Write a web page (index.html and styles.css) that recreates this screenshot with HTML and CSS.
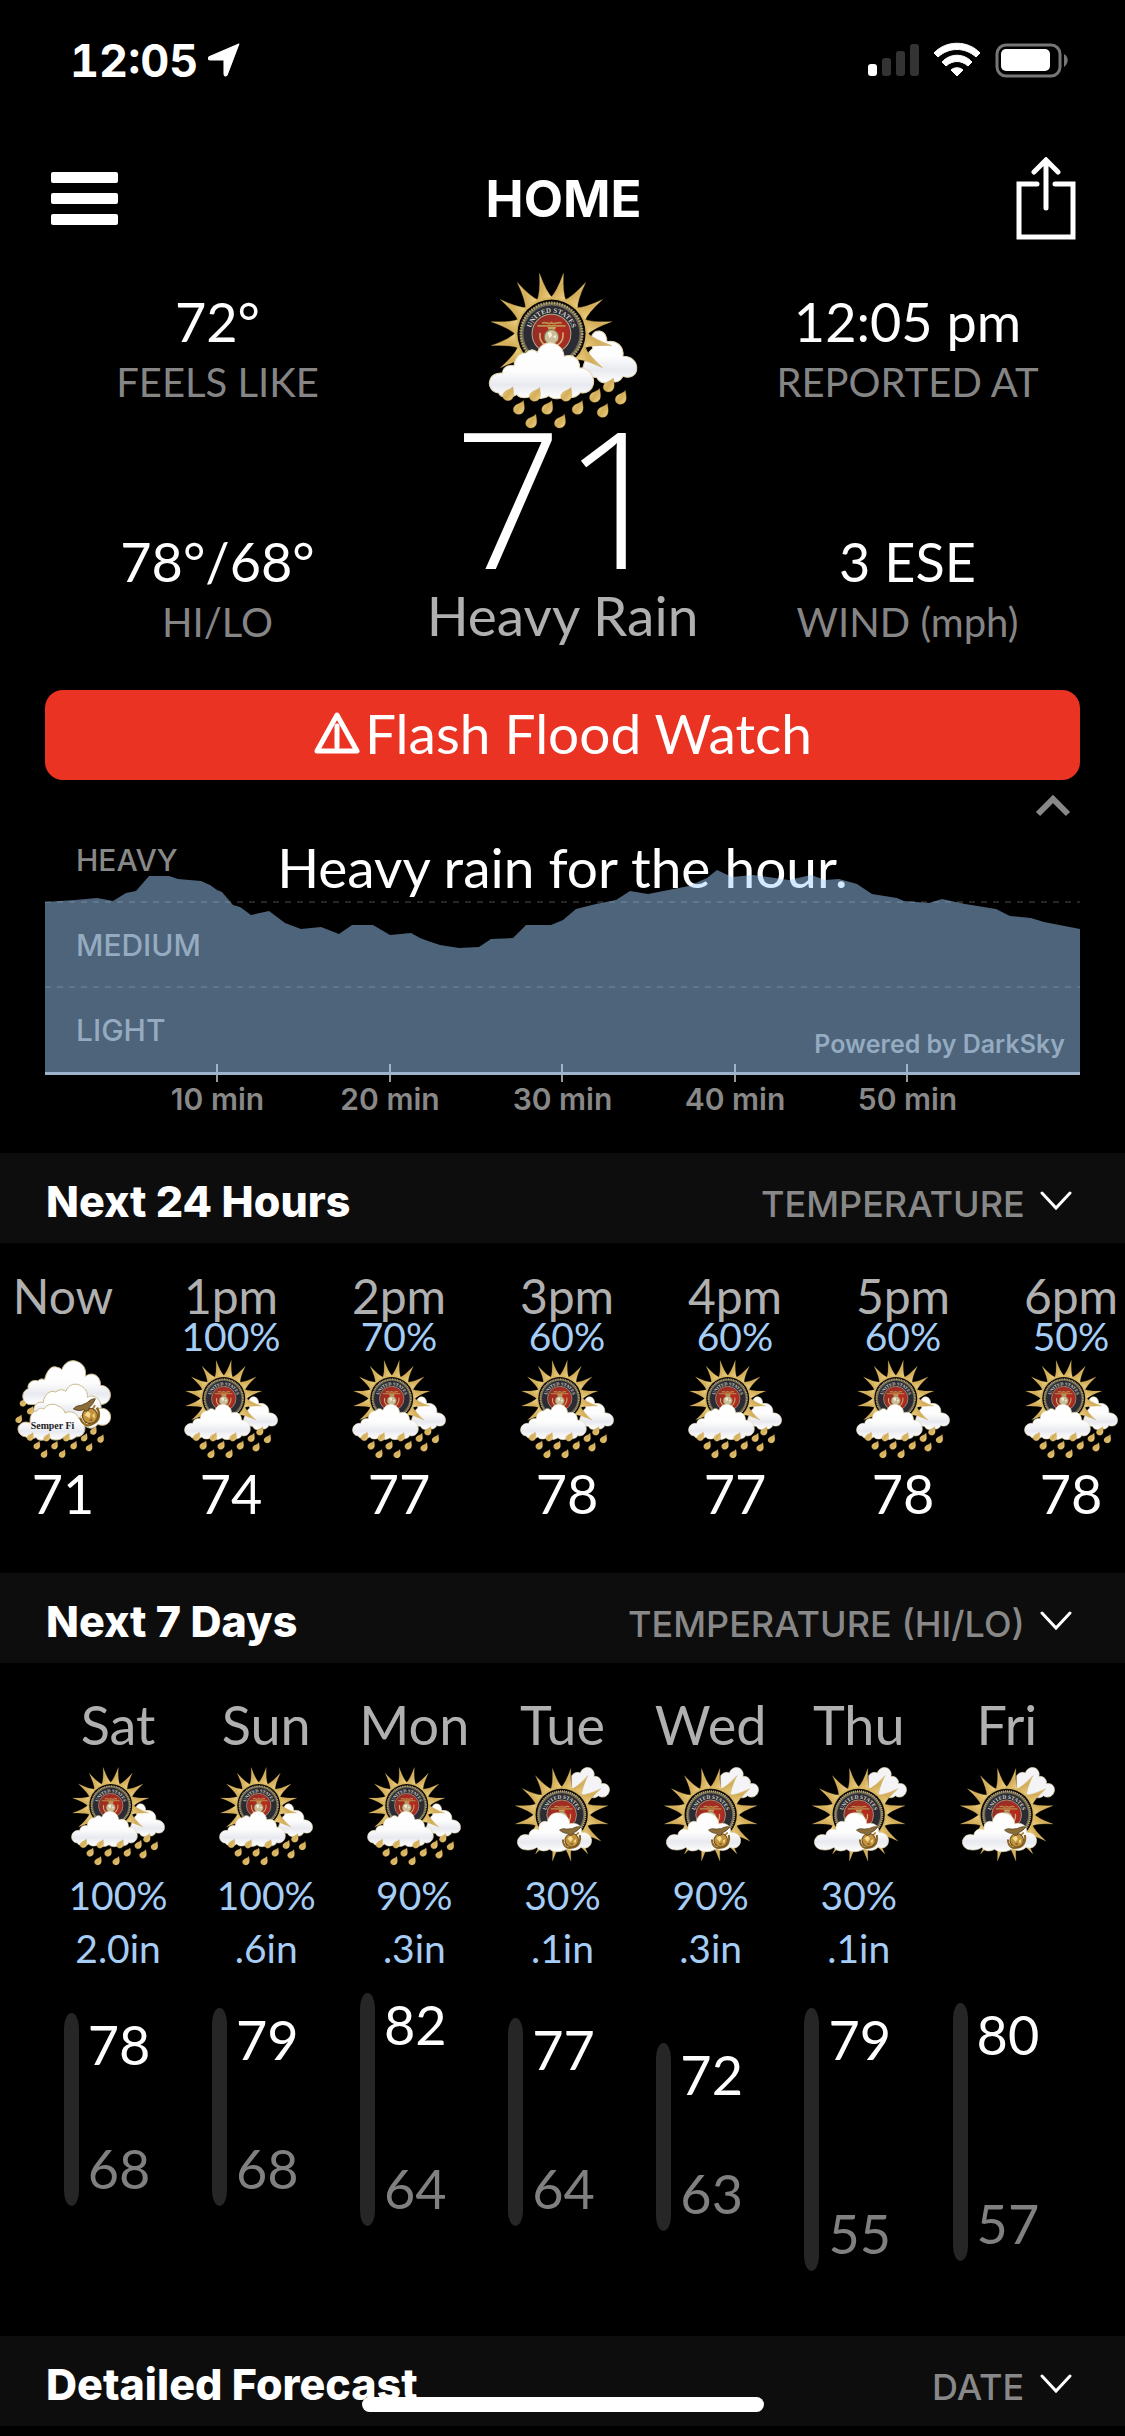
FILE: index.html
```html
<!DOCTYPE html>
<html lang="en">
<head>
    <meta charset="UTF-8">
    <meta name="viewport" content="width=device-width, initial-scale=1.0">
    <title>Weather - Home</title>
    <link rel="stylesheet" href="styles.css">
</head>
<body>
    <!-- shared weather icons -->
    <svg class="sprite" aria-hidden="true">
        <defs>
            <linearGradient id="gold" x1="0" y1="0" x2="1" y2="1">
                <stop offset="0" stop-color="#f1dc92"/>
                <stop offset="0.5" stop-color="#d4ad58"/>
                <stop offset="1" stop-color="#efd68a"/>
            </linearGradient>
            <linearGradient id="cloudFill" x1="0" y1="0" x2="0" y2="1">
                <stop offset="0" stop-color="#ffffff"/>
                <stop offset="0.5" stop-color="#fdfdfd"/>
                <stop offset="0.75" stop-color="#e9eaf0"/>
                <stop offset="1" stop-color="#ffffff"/>
            </linearGradient>
            <radialGradient id="red" cx="0.6" cy="0.5" r="0.6">
                <stop offset="0" stop-color="#c8281c"/>
                <stop offset="1" stop-color="#8c2f28"/>
            </radialGradient>
            <path id="ray" d="M-24 -104 Q-9 -124 0 -184 Q9 -124 24 -104 Z"/>
            <path id="arcTop" d="M-63 0 A63 63 0 0 1 63 0"/>
            <path id="drop" d="M14 -25 C17 -8 19 2 13 10 C5 20 -10 18 -15 8 C-19 -4 -10 -12 -1 -15 C6 -18 11 -21 14 -25 Z" fill="url(#gold)" stroke="#b98f3c" stroke-width="1"/>

            <g id="emblem">
                <path d="M-26 2 C-28 26 -14 33 2 30 C18 29 28 14 26 -4" fill="none" stroke="#8a6422" stroke-width="6"/>
                <path d="M-24 24 L24 -12" stroke="#a67c2e" stroke-width="5"/>
                <circle cx="0" cy="8" r="20" fill="#c39440" stroke="#6b4b17" stroke-width="3"/>
                <path d="M-12 0 L0 -6 L4 4 L-4 13 Z M5 11 L14 6 L9 20 Z" fill="#f6dc88"/>
                <path d="M-8 18 L2 16 L0 24 Z" fill="#8a6422"/>
                <path d="M-32 -27 C-18 -34 -10 -24 0 -27 C10 -24 18 -34 32 -27 C24 -20 16 -14 8 -14 L4 -7 L-4 -7 L-8 -14 C-16 -14 -24 -18 -32 -27 Z" fill="#8c6d38" stroke="#4d3818" stroke-width="2"/>
            </g>

            <g id="sun">
                <g fill="url(#gold)" stroke="#b48f45" stroke-width="1">
                    <use href="#ray" transform="rotate(11.25)"/>
                    <use href="#ray" transform="rotate(33.75)"/>
                    <use href="#ray" transform="rotate(56.25)"/>
                    <use href="#ray" transform="rotate(78.75)"/>
                    <use href="#ray" transform="rotate(101.25)"/>
                    <use href="#ray" transform="rotate(123.75)"/>
                    <use href="#ray" transform="rotate(146.25)"/>
                    <use href="#ray" transform="rotate(168.75)"/>
                    <use href="#ray" transform="rotate(191.25)"/>
                    <use href="#ray" transform="rotate(213.75)"/>
                    <use href="#ray" transform="rotate(236.25)"/>
                    <use href="#ray" transform="rotate(258.75)"/>
                    <use href="#ray" transform="rotate(281.25)"/>
                    <use href="#ray" transform="rotate(303.75)"/>
                    <use href="#ray" transform="rotate(326.25)"/>
                    <use href="#ray" transform="rotate(348.75)"/>
                </g>
                <circle r="109" fill="#d9b660"/>
                <circle r="102" fill="#0c0a08"/>
                <circle r="94" fill="#6d6752"/>
                <circle r="92" fill="none" stroke="#b7a672" stroke-width="8" stroke-dasharray="4 4"/>
                <circle r="84" fill="#2b2b33"/>
                <circle r="58" fill="url(#red)" stroke="#b5a888" stroke-width="3"/>
                <text class="seal-text"><textPath href="#arcTop" startOffset="50%" text-anchor="middle">UNITED STATES</textPath></text>
                <path d="M-42 -23 H42 M-28 -31 C-16 -38 -8 -24 0 -33 C8 -24 20 -38 30 -31" fill="none" stroke="#b8914a" stroke-width="5"/>
                <path d="M-12 -20 H14 L8 -6 H-6 Z" fill="#c8a560"/>
                <circle cx="0" cy="10" r="22" fill="#cbbd96" stroke="#7c6a45" stroke-width="3"/>
                <path d="M-12 -2 L-2 -6 L2 6 L-6 14 Z M5 8 L14 4 L12 16 Z" fill="#f3efdf"/>
                <path d="M-34 -2 C-38 24 -22 38 0 38 C22 38 38 22 34 -4" fill="none" stroke="#c8ad70" stroke-width="5"/>
            </g>
        </defs>

        <symbol id="icon-rain" viewBox="205 35 455 470">
            <path d="M492 320 C500 290 510 270 522 262 C508 235 520 208 542 210 C558 212 564 228 564 242 C590 236 616 254 612 286 C640 286 656 304 653 326 C650 348 628 352 612 346 C604 362 588 368 578 358 C562 372 542 366 534 350 C514 350 498 336 492 320 Z" fill="url(#cloudFill)" stroke="#e6d9b4" stroke-width="3"/>
            <use href="#sun" transform="translate(398 218)"/>
            <path d="M262 406 C252 408 243 404 240 396 C218 394 209 374 213 360 C217 342 234 334 252 336 C250 322 266 310 286 314 C288 292 302 274 322 276 C334 262 346 264 356 274 C364 250 388 240 408 248 C424 254 434 268 436 286 C462 276 484 296 482 320 C506 320 526 340 524 366 C522 386 502 400 484 394 C474 410 454 414 440 404 C426 418 398 414 390 404 C374 416 350 414 340 404 C320 414 300 410 294 400 C284 408 272 410 262 406 Z" fill="url(#cloudFill)" stroke="#e6d9b4" stroke-width="3"/>
            <use href="#drop" x="268" y="402"/>
            <use href="#drop" x="348" y="404"/>
            <use href="#drop" x="442" y="404"/>
            <use href="#drop" x="300" y="443"/>
            <use href="#drop" x="385" y="443"/>
            <use href="#drop" x="476" y="443"/>
            <use href="#drop" x="337" y="484"/>
            <use href="#drop" x="423" y="484"/>
            <use href="#drop" x="528" y="407"/>
            <use href="#drop" x="569" y="376"/>
            <use href="#drop" x="605" y="413"/>
            <use href="#drop" x="551" y="452"/>
        </symbol>

        <symbol id="icon-cloudy" viewBox="46 52 286 296">
            <path d="M218 140 V78 C226 68 236 66 244 70 C248 54 270 48 280 60 C286 68 286 74 284 80 C300 78 310 92 306 102 C324 98 334 112 330 126 C326 142 308 146 298 138 C286 148 276 144 270 138 Z" fill="#f4f4f7" stroke="#e6d9b4" stroke-width="2"/>
            <use href="#sun" transform="translate(188 195) scale(0.766)"/>
            <path d="M76 299 C58 296 50 276 60 264 C66 254 80 252 90 256 C92 240 106 234 120 240 C118 222 130 210 146 216 C148 196 166 186 182 190 C200 192 212 206 212 222 C232 216 250 228 248 248 C266 246 280 260 277 276 C274 292 260 298 246 292 C234 304 216 304 206 296 C190 308 162 308 152 298 C138 306 120 304 114 292 C104 300 88 302 76 299 Z" fill="url(#cloudFill)" stroke="#e6d9b4" stroke-width="2"/>
            <use href="#emblem" transform="translate(217 263) rotate(-8)"/>
        </symbol>

        <symbol id="icon-semperfi" viewBox="42 30 292 298">
            <g transform="translate(66 160) scale(0.6)"><use href="#drop"/></g>
            <g transform="translate(88 184) scale(0.6)"><use href="#drop"/></g>
            <g transform="translate(53 210) scale(0.6)"><use href="#drop"/></g>
            <g fill="url(#cloudFill)" stroke="#c9b98a" stroke-width="3">
                <path d="M84 164 C62 158 58 124 82 116 C78 98 96 86 112 92 C116 86 124 84 132 88 C138 62 152 44 168 50 C176 52 182 54 184 58 C192 36 210 28 224 31 C248 36 260 54 256 78 C280 60 304 80 302 106 C326 104 338 130 330 146 C322 166 300 166 286 160 Z"/>
                <path d="M100 190 C94 168 110 152 128 158 C130 132 152 118 166 126 C176 116 190 118 196 124 C204 102 228 96 244 108 C258 116 264 130 262 142 C280 130 304 146 304 172 L290 210 H110 Z"/>
                <path d="M74 262 C52 260 44 234 58 224 C66 216 78 216 88 220 C86 198 96 182 108 184 C114 174 124 174 130 178 C136 164 158 158 172 168 C184 172 194 182 194 190 C210 180 232 190 236 206 C250 190 270 180 290 180 C312 166 338 184 332 208 C328 228 306 230 294 224 C284 238 268 240 254 228 C258 248 246 264 228 262 C214 276 198 270 190 264 C176 274 156 274 148 266 C132 274 112 276 106 264 C94 270 82 268 74 262 Z"/>
            </g>
            <text class="motto" x="156" y="238" text-anchor="middle">Semper Fi</text>
            <use href="#emblem" transform="translate(266 190) rotate(-25) scale(1.15)"/>
            <g transform="translate(88 264) scale(0.6)"><use href="#drop"/></g>
            <g transform="translate(138 266) scale(0.6)"><use href="#drop"/></g>
            <g transform="translate(198 266) scale(0.6)"><use href="#drop"/></g>
            <g transform="translate(108 290) scale(0.6)"><use href="#drop"/></g>
            <g transform="translate(162 290) scale(0.6)"><use href="#drop"/></g>
            <g transform="translate(220 290) scale(0.6)"><use href="#drop"/></g>
            <g transform="translate(130 316) scale(0.6)"><use href="#drop"/></g>
            <g transform="translate(185 316) scale(0.6)"><use href="#drop"/></g>
            <g transform="translate(252 266) scale(0.6)"><use href="#drop"/></g>
            <g transform="translate(280 246) scale(0.6)"><use href="#drop"/></g>
            <g transform="translate(302 270) scale(0.6)"><use href="#drop"/></g>
            <g transform="translate(267 296) scale(0.6)"><use href="#drop"/></g>
        </symbol>

        <symbol id="icon-chevron" viewBox="0 0 32 20">
            <path d="M2 2 L16 17 L30 2" fill="none" stroke="#fff" stroke-width="3" stroke-linecap="round"/>
        </symbol>
    </svg>

    <div class="status-bar">
        <div class="status-time">
            12:05
            <svg width="32" height="34" viewBox="0 0 30 32" aria-hidden="true"><path d="M29 1 L18 30 C17 32 15 31 15 29 V16 H2 C0 16 0 14 1 13 Z" fill="#fff" stroke="#fff" stroke-linejoin="round"/></svg>
        </div>
        <svg width="202" height="36" viewBox="0 0 202 36" aria-hidden="true">
            <rect x="1" y="22" width="9" height="12" rx="3" fill="#fff"/>
            <rect x="15" y="16" width="9" height="18" rx="3" fill="#333"/>
            <rect x="29" y="9" width="9" height="25" rx="3" fill="#333"/>
            <rect x="43" y="2" width="9" height="32" rx="3" fill="#333"/>
            <path d="M67 11 C79 -2 101 -2 113 11 L109 15 C98 5 82 5 71 15 Z" fill="#fff" stroke="#fff"/>
            <path d="M75 20 C83 11 97 11 105 20 L101 24 C94 18 86 18 79 24 Z" fill="#fff" stroke="#fff"/>
            <path d="M84 28 C87 25 93 25 96 28 L90 34 Z" fill="#fff" stroke="#fff"/>
            <rect x="130" y="3" width="63" height="31" rx="9" fill="none" stroke="#767676" stroke-width="3"/>
            <rect x="134" y="7" width="49" height="22" rx="5" fill="#fff"/>
            <path d="M197 12 C202 15 202 21 197 25 Z" fill="#767676"/>
        </svg>
    </div>

    <header class="header">
        <button class="icon-button" type="button" aria-label="Menu">
            <svg width="68" height="54" viewBox="0 0 68 54">
                <rect width="67" height="11" rx="2" fill="#fff"/>
                <rect y="21" width="67" height="11" rx="2" fill="#fff"/>
                <rect y="42" width="67" height="11" rx="2" fill="#fff"/>
            </svg>
        </button>
        <h1>HOME</h1>
        <button class="icon-button share" type="button" aria-label="Share">
            <svg width="60" height="84" viewBox="0 0 60 84" fill="none" stroke="#fff" stroke-width="5" stroke-linecap="round">
                <path d="M21 27 H3 V80 H57 V27 H39"/>
                <path d="M30 51 V4 M18 15 L30 3 L42 15"/>
            </svg>
        </button>
    </header>

    <main>
        <section class="current">
            <div class="stats">
                <div class="stat">
                    <div class="stat-value">72°</div>
                    <div class="stat-label">FEELS LIKE</div>
                </div>
                <div class="stat">
                    <div class="stat-value">78°/68°</div>
                    <div class="stat-label">HI/LO</div>
                </div>
            </div>
            <div class="now">
                <svg class="now-icon" aria-hidden="true"><use href="#icon-rain"/></svg>
                <div class="now-temp">71</div>
                <div class="now-text">Heavy Rain</div>
            </div>
            <div class="stats">
                <div class="stat">
                    <div class="stat-value">12:05 pm</div>
                    <div class="stat-label">REPORTED AT</div>
                </div>
                <div class="stat">
                    <div class="stat-value">3 ESE</div>
                    <div class="stat-label">WIND (mph)</div>
                </div>
            </div>
        </section>

        <section class="alerts">
            <button class="alert" type="button">
                <svg width="48" height="44" viewBox="0 0 48 44" aria-hidden="true">
                    <path d="M24 4 L44 40 H4 Z" fill="none" stroke="#fff" stroke-width="5" stroke-linejoin="round"/>
                    <path d="M24 15 V36" stroke="#fff" stroke-width="5" stroke-linecap="round"/>
                </svg>
                Flash Flood Watch
            </button>
        </section>

        <section class="rain">
            <button class="collapse" type="button" aria-label="Collapse">
                <svg width="36" height="22" viewBox="0 0 36 22"><path d="M3 19 L18 4 L33 19" fill="none" stroke="#888" stroke-width="6"/></svg>
            </button>
            <div class="chart">
                <div class="band">HEAVY</div>
                <div class="band">MEDIUM</div>
                <div class="band">LIGHT</div>
                <div class="chart-text">Heavy rain for the hour.</div>
                <div class="credit">Powered by DarkSky</div>
                <svg class="chart-area" viewBox="0 -23 1035 258" preserveAspectRatio="none" aria-hidden="true">
                    <path d="M0 62 H1035 M0 147 H1035" stroke="#fff" stroke-opacity="0.15" stroke-width="2" stroke-dasharray="6 6"/>
                    <path d="M172 224 V242 M345 224 V242 M517 224 V242 M690 224 V242 M862 224 V242" stroke="#999" stroke-width="2"/>
                    <path fill="#a0d2ff" fill-opacity="0.48" d="M0 62 L30 60 L52 58 L68 61 L81 53 L91 51 L104 36 L124 36 L133 39 L156 41 L165 45 L172 50 L177 52 L188 65 L195 67 L206 75 L224 71 L240 83 L256 89 L276 87 L294 94 L307 85 L328 85 L345 95 L366 93 L375 98 L383 101 L395 105 L414 108 L434 107 L446 99 L468 98 L481 85 L506 85 L518 80 L531 69 L551 64 L571 60 L585 51 L603 54 L644 46 L662 38 L672 30 L687 37 L708 35 L723 37 L744 40 L766 35 L780 40 L794 39 L812 44 L827 54 L852 58 L859 61 L884 63 L897 59 L920 64 L951 69 L965 76 L986 78 L999 82 L1035 89 V235 H0 Z"/>
                </svg>
            </div>
            <div class="minutes">
                <span>10 min</span>
                <span>20 min</span>
                <span>30 min</span>
                <span>40 min</span>
                <span>50 min</span>
            </div>
        </section>

        <section>
            <div class="bar">
                <h2>Next 24 Hours</h2>
                <div class="picker">
                    <select aria-label="Hourly value"><option>TEMPERATURE</option></select>
                    <svg width="32" height="20" aria-hidden="true"><use href="#icon-chevron"/></svg>
                </div>
            </div>
            <div class="hours">
                <div class="hour">
                    <div class="hour-name">Now</div>
                    <div class="hour-rain"></div>
                    <svg class="icon" aria-hidden="true"><use href="#icon-semperfi"/></svg>
                    <div class="temp">71</div>
                </div>
                <div class="hour">
                    <div class="hour-name">1pm</div>
                    <div class="hour-rain">100%</div>
                    <svg class="icon" aria-hidden="true"><use href="#icon-rain"/></svg>
                    <div class="temp">74</div>
                </div>
                <div class="hour">
                    <div class="hour-name">2pm</div>
                    <div class="hour-rain">70%</div>
                    <svg class="icon" aria-hidden="true"><use href="#icon-rain"/></svg>
                    <div class="temp">77</div>
                </div>
                <div class="hour">
                    <div class="hour-name">3pm</div>
                    <div class="hour-rain">60%</div>
                    <svg class="icon" aria-hidden="true"><use href="#icon-rain"/></svg>
                    <div class="temp">78</div>
                </div>
                <div class="hour">
                    <div class="hour-name">4pm</div>
                    <div class="hour-rain">60%</div>
                    <svg class="icon" aria-hidden="true"><use href="#icon-rain"/></svg>
                    <div class="temp">77</div>
                </div>
                <div class="hour">
                    <div class="hour-name">5pm</div>
                    <div class="hour-rain">60%</div>
                    <svg class="icon" aria-hidden="true"><use href="#icon-rain"/></svg>
                    <div class="temp">78</div>
                </div>
                <div class="hour">
                    <div class="hour-name">6pm</div>
                    <div class="hour-rain">50%</div>
                    <svg class="icon" aria-hidden="true"><use href="#icon-rain"/></svg>
                    <div class="temp">78</div>
                </div>
            </div>
        </section>

        <section>
            <div class="bar">
                <h2>Next 7 Days</h2>
                <div class="picker">
                    <select aria-label="Daily value"><option>TEMPERATURE (HI/LO)</option></select>
                    <svg width="32" height="20" aria-hidden="true"><use href="#icon-chevron"/></svg>
                </div>
            </div>
            <!-- range: 5px per degree, 82 is the top of the scale -->
            <div class="days">
                <div class="day">
                    <div class="day-name">Sat</div>
                    <svg class="icon" aria-hidden="true"><use href="#icon-rain"/></svg>
                    <div class="day-rain">100%</div>
                    <div class="day-rain">2.0in</div>
                    <div class="range" style="margin-top: 41px; height: 193px">
                        <div class="range-temps"><span>78</span><span class="low">68</span></div>
                    </div>
                </div>
                <div class="day">
                    <div class="day-name">Sun</div>
                    <svg class="icon" aria-hidden="true"><use href="#icon-rain"/></svg>
                    <div class="day-rain">100%</div>
                    <div class="day-rain">.6in</div>
                    <div class="range" style="margin-top: 36px; height: 198px">
                        <div class="range-temps"><span>79</span><span class="low">68</span></div>
                    </div>
                </div>
                <div class="day">
                    <div class="day-name">Mon</div>
                    <svg class="icon" aria-hidden="true"><use href="#icon-rain"/></svg>
                    <div class="day-rain">90%</div>
                    <div class="day-rain">.3in</div>
                    <div class="range" style="margin-top: 21px; height: 233px">
                        <div class="range-temps"><span>82</span><span class="low">64</span></div>
                    </div>
                </div>
                <div class="day">
                    <div class="day-name">Tue</div>
                    <svg class="icon" aria-hidden="true"><use href="#icon-cloudy"/></svg>
                    <div class="day-rain">30%</div>
                    <div class="day-rain">.1in</div>
                    <div class="range" style="margin-top: 46px; height: 208px">
                        <div class="range-temps"><span>77</span><span class="low">64</span></div>
                    </div>
                </div>
                <div class="day">
                    <div class="day-name">Wed</div>
                    <svg class="icon" aria-hidden="true"><use href="#icon-cloudy"/></svg>
                    <div class="day-rain">90%</div>
                    <div class="day-rain">.3in</div>
                    <div class="range" style="margin-top: 71px; height: 188px">
                        <div class="range-temps"><span>72</span><span class="low">63</span></div>
                    </div>
                </div>
                <div class="day">
                    <div class="day-name">Thu</div>
                    <svg class="icon" aria-hidden="true"><use href="#icon-cloudy"/></svg>
                    <div class="day-rain">30%</div>
                    <div class="day-rain">.1in</div>
                    <div class="range" style="margin-top: 36px; height: 263px">
                        <div class="range-temps"><span>79</span><span class="low">55</span></div>
                    </div>
                </div>
                <div class="day">
                    <div class="day-name">Fri</div>
                    <svg class="icon" aria-hidden="true"><use href="#icon-cloudy"/></svg>
                    <div class="day-rain"></div>
                    <div class="day-rain"></div>
                    <div class="range" style="margin-top: 31px; height: 258px">
                        <div class="range-temps"><span>80</span><span class="low">57</span></div>
                    </div>
                </div>
            </div>
        </section>

        <section>
            <div class="bar">
                <h2>Detailed Forecast</h2>
                <div class="picker">
                    <select aria-label="Forecast order"><option>DATE</option></select>
                    <svg width="32" height="20" aria-hidden="true"><use href="#icon-chevron"/></svg>
                </div>
            </div>
        </section>
    </main>
    <div class="home-indicator"></div>
</body>
</html>
```
FILE: styles.css
```css
* {
    box-sizing: border-box;
}
body {
    margin: 0;
    background-color: #000;
    color: #fff;
    font-family: Lato, "Open Sans", sans-serif;
    overflow-x: hidden;
}
h1, h2 {
    margin: 0;
    font-family: Inter, sans-serif;
    font-weight: 700;
}
svg {
    display: block;
    flex-shrink: 0;
}
button {
    border: none;
    padding: 0;
    background: none;
    color: inherit;
    font-family: inherit;
    cursor: pointer;
}
.sprite {
    position: absolute;
    width: 0;
    height: 0;
}
.seal-text {
    font-family: "Liberation Serif", serif;
    font-size: 21px;
    font-weight: bold;
    fill: #d5d2c8;
}
.motto {
    font-family: "Liberation Serif", serif;
    font-size: 30px;
    font-weight: bold;
    fill: #222;
}

/* status bar + header */
.status-bar {
    display: flex;
    align-items: center;
    justify-content: space-between;
    height: 120px;
    padding: 0 56px 0 70px;
}
.status-time {
    display: flex;
    align-items: center;
    gap: 10px;
    font-family: Inter, sans-serif;
    font-size: 45px;
    font-weight: 700;
    font-variant-numeric: tabular-nums;
}
.header {
    display: flex;
    align-items: center;
    justify-content: space-between;
    height: 150px;
    padding: 7px 49px 0 51px;
}
.header h1 {
    font-size: 51px;
}
.icon-button {
    width: 68px;
}
.share svg {
    margin-left: auto;
}

/* current conditions */
.current {
    display: grid;
    grid-template-columns: repeat(3, 1fr);
    padding: 0 45px;
    text-align: center;
}
.stats {
    display: flex;
    flex-direction: column;
    gap: 124px;
    padding-top: 20px;
}
.stat-value {
    font-size: 54px;
    line-height: 64px;
}
.stat-label {
    margin-top: 4px;
    font-size: 40px;
    line-height: 48px;
    color: #858585;
}
.now-icon {
    width: 152px;
    height: 158px;
    margin: 2px auto 0;
}
.now-temp {
    font-family: "Open Sans", sans-serif;
    font-size: 190px;
    font-weight: 300;
    line-height: 132px;
}
.now-text {
    margin-top: 21px;
    font-size: 55px;
    line-height: 64px;
    color: #b0b0b0;
}

.alerts {
    padding: 43px 45px 0;
}
.alert {
    display: flex;
    align-items: center;
    justify-content: center;
    gap: 4px;
    width: 100%;
    height: 90px;
    padding-bottom: 4px;
    border-radius: 18px;
    background-color: #ea3323;
    font-size: 55px;
}

/* next hour rain chart */
.rain {
    padding: 0 45px 36px;
    font-family: Inter, sans-serif;
}
.collapse {
    display: block;
    height: 37px;
    padding-top: 15px;
    margin: 0 9px 0 auto;
}
.chart {
    position: relative;
    border-bottom: 3px solid #999;
}
.band {
    height: 85px;
    padding-left: 31px;
    font-size: 30px;
    font-weight: 500;
    line-height: 87px;
    color: #888;
}
.chart-text {
    position: absolute;
    top: 18px;
    left: 0;
    right: 0;
    font-family: Lato, sans-serif;
    font-size: 55px;
    line-height: 64px;
    text-align: center;
}
.credit {
    position: absolute;
    right: 15px;
    bottom: 13px;
    font-size: 25px;
    font-weight: 600;
    color: #888;
}
.chart-area {
    position: absolute;
    left: 0;
    top: 0;
    width: 100%;
    height: 258px;
    overflow: visible;
}
.minutes {
    display: grid;
    grid-template-columns: 1fr repeat(5, 2fr) 1fr;
    padding-top: 6px;
    font-size: 30px;
    font-weight: 600;
    line-height: 36px;
    text-align: center;
    color: #888;
}
.minutes span:first-child {
    grid-column: 2;
}

/* section bars */
.bar {
    display: flex;
    align-items: center;
    justify-content: space-between;
    height: 90px;
    padding: 6px 53px 0 46px;
    background-color: #0d0d0d;
}
.bar h2 {
    font-size: 43px;
    font-weight: 800;
}
.picker {
    display: flex;
    align-items: center;
    gap: 15px;
}
.picker select {
    appearance: none;
    border: none;
    padding: 6px 0 0;
    background: none;
    color: #888;
    font-family: Inter, sans-serif;
    font-size: 36px;
    font-weight: 500;
}

.icon {
    width: 96px;
    height: 99px;
}

/* hourly */
.hours {
    display: flex;
    margin-left: -21px;
    padding: 31px 0 47px;
    overflow: hidden;
}
.hour {
    display: flex;
    flex: 0 0 168px;
    flex-direction: column;
    align-items: center;
}
.hour-name {
    font-size: 48px;
    line-height: 44px;
    color: #b0b0b0;
}
.hour-rain {
    height: 36px;
    margin-bottom: 6px;
    font-size: 39px;
    line-height: 36px;
    color: #a5cdf5;
}
.temp {
    margin-top: 3px;
    font-size: 54px;
    line-height: 64px;
}

/* daily */
.days {
    display: grid;
    grid-template-columns: repeat(7, 1fr);
    padding: 30px 44px 65px;
}
.day {
    display: flex;
    flex-direction: column;
    align-items: center;
}
.day-name {
    margin-bottom: 10px;
    font-size: 54px;
    line-height: 64px;
    color: #b0b0b0;
}
.day-rain {
    height: 48px;
    margin-top: 5px;
    font-size: 39px;
    line-height: 48px;
    color: #a5cdf5;
}
.range {
    display: flex;
    gap: 9px;
    margin-right: 22px;
}
.range::before {
    content: "";
    width: 15px;
    border-radius: 8px / 16px;
    background-color: #262626;
}
.range-temps {
    display: flex;
    flex-direction: column;
    justify-content: space-between;
    padding-bottom: 5px;
    font-size: 54px;
    line-height: 64px;
}
.range-temps .low {
    color: #808080;
}

.home-indicator {
    position: fixed;
    left: 50%;
    bottom: 24px;
    width: 402px;
    height: 15px;
    margin-left: -201px;
    border-radius: 8px;
    background-color: #fff;
}
```
